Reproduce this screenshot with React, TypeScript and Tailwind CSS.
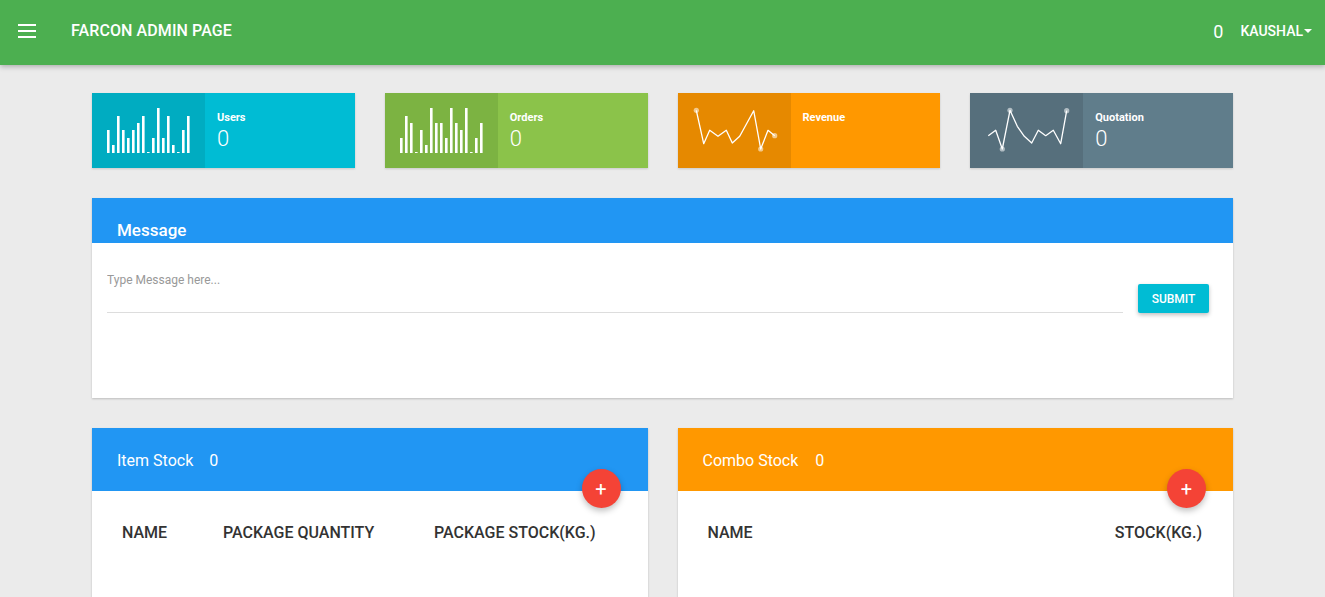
import React from 'react'

const USERS_BARS = [23, 8, 37, 23, 15, 23, 30, 37, 1, 15, 45, 15, 37, 8, 1, 23, 37]
const ORDERS_BARS = [15, 37, 30, 1, 23, 8, 45, 30, 30, 15, 45, 30, 23, 45, 1, 15, 30]

const REVENUE_PTS: [number, number][] = [
  [18.3, 17.3], [25.7, 50.7], [31.7, 37.3], [40, 43.3], [48.3, 37.3], [54.3, 50],
  [61.7, 43.3], [75.7, 17.7], [82.7, 56], [90, 37.3], [96.7, 42.7],
]
const QUOTE_PTS: [number, number][] = [
  [18.3, 42.7], [25.7, 37.3], [32.3, 56], [40, 17.3], [47.3, 33.3], [54.3, 43.3],
  [61.7, 50], [68.3, 37.3], [75.7, 42.7], [83.3, 37.3], [90.7, 50.7], [96.7, 17.7],
]

function Bars({ data }: { data: number[] }) {
  return (
    <svg width="113" height="75" viewBox="0 0 113 75">
      {data.map((h, i) => (
        <rect key={i} x={15 + i * 5} y={60 - h} width="2.6" height={h} fill="#fff" />
      ))}
    </svg>
  )
}

function Line({ pts, dots }: { pts: [number, number][]; dots: number[] }) {
  return (
    <svg width="113" height="75" viewBox="0 0 113 75">
      <polyline
        points={pts.map((p) => p.join(',')).join(' ')}
        fill="none"
        stroke="#fff"
        strokeWidth="1.3"
        strokeLinejoin="round"
      />
      {dots.map((d) => (
        <circle key={d} cx={pts[d][0]} cy={pts[d][1]} r="2.6" fill="rgba(255,255,255,0.55)" />
      ))}
    </svg>
  )
}

type Stat = { label: string; value?: string; bg: string; dark: string; chart: React.ReactNode }

function StatCard({ s }: { s: Stat }) {
  return (
    <div className={`flex h-[75px] shadow-[0_1px_2px_rgba(0,0,0,0.15)] ${s.bg}`}>
      <div className={`w-[113px] shrink-0 ${s.dark}`}>{s.chart}</div>
      <div className="pl-3 pt-[18px] text-white">
        <div className="text-[11px] font-bold leading-[14px]">{s.label}</div>
        {s.value !== undefined && (
          <div className="text-[22px] font-light leading-[26px] mt-[1px]">{s.value}</div>
        )}
      </div>
    </div>
  )
}

function Fab() {
  return (
    <button
      type="button"
      className="absolute right-[27px] top-[41px] w-[39px] h-[39px] rounded-full bg-[#F44336] text-white text-[20px] leading-none flex items-center justify-center shadow-[0_3px_6px_rgba(0,0,0,0.25)]"
    >
      +
    </button>
  )
}

export default function App() {
  const stats: Stat[] = [
    { label: 'Users', value: '0', bg: 'bg-[#00BCD4]', dark: 'bg-[#00ACC1]', chart: <Bars data={USERS_BARS} /> },
    { label: 'Orders', value: '0', bg: 'bg-[#8BC34A]', dark: 'bg-[#7CB342]', chart: <Bars data={ORDERS_BARS} /> },
    { label: 'Revenue', bg: 'bg-[#FF9800]', dark: 'bg-[#E68900]', chart: <Line pts={REVENUE_PTS} dots={[0, 8, 10]} /> },
    { label: 'Quotation', value: '0', bg: 'bg-[#607D8B]', dark: 'bg-[#566F7C]', chart: <Line pts={QUOTE_PTS} dots={[2, 3, 11]} /> },
  ]

  return (
    <div className="min-h-screen bg-[#EBEBEB] font-['Roboto',sans-serif]">
      <header className="h-[65px] bg-[#4CAF50] flex items-center pb-[3px] text-white shadow-[0_2px_5px_rgba(0,0,0,0.25)] relative z-10">
        <div className="ml-[18px] w-[18px] flex flex-col gap-[4px]">
          <span className="block h-[2px] bg-white" />
          <span className="block h-[2px] bg-white" />
          <span className="block h-[2px] bg-white" />
        </div>
        <div className="ml-[35px] text-[16px] font-medium tracking-[0.1px]">FARCON ADMIN PAGE</div>
        <div className="ml-auto flex items-center mr-[13px]">
          <span className="text-[18px] mr-[17px]">0</span>
          <span className="text-[14px] font-medium">KAUSHAL</span>
          <span className="ml-[1px] w-0 h-0 border-l-[4px] border-r-[4px] border-t-[4px] border-l-transparent border-r-transparent border-t-white" />
        </div>
      </header>

      <main className="px-[92px] pt-[28px]">
        <div className="grid grid-cols-4 gap-[30px]">
          {stats.map((s) => (
            <StatCard key={s.label} s={s} />
          ))}
        </div>

        <section className="mt-[30px] bg-white h-[200px] shadow-[0_1px_2px_rgba(0,0,0,0.2)]">
          <div className="h-[45px] bg-[#2196F3] flex items-end pl-[25px] pb-[1px]">
            <h2 className="text-white text-[17px] font-medium leading-[24px]">Message</h2>
          </div>
          <div className="flex items-start px-[15px] pt-[24px]">
            <div className="flex-1 border-b border-[#DDDDDD] h-[46px]">
              <input
                className="w-full text-[12px] text-[#333] placeholder:text-[#999] outline-none bg-transparent"
                placeholder="Type Message here..."
              />
            </div>
            <button
              type="button"
              className="ml-[15px] mr-[9px] mt-[17px] w-[71px] h-[29px] bg-[#00BCD4] text-white text-[12px] font-medium rounded-[2px] shadow-[0_2px_4px_rgba(0,0,0,0.25)]"
            >
              SUBMIT
            </button>
          </div>
        </section>

        <div className="mt-[30px] grid grid-cols-2 gap-[30px]">
          <section className="bg-white h-[200px] shadow-[0_1px_2px_rgba(0,0,0,0.2)]">
            <div className="relative h-[63px] bg-[#2196F3] flex items-center pl-[25px] pt-[2px] text-white text-[16px]">
              <span>Item Stock</span>
              <span className="ml-[16px]">0</span>
              <Fab />
            </div>
            <div className="flex pl-[30px] pt-[30px] text-[16px] font-medium text-[#333]">
              <div className="w-[101px]">NAME</div>
              <div className="w-[211px]">PACKAGE QUANTITY</div>
              <div>PACKAGE STOCK(KG.)</div>
            </div>
          </section>
          <section className="bg-white h-[200px] shadow-[0_1px_2px_rgba(0,0,0,0.2)]">
            <div className="relative h-[63px] bg-[#FF9800] flex items-center pl-[25px] pt-[2px] text-white text-[16px]">
              <span>Combo Stock</span>
              <span className="ml-[17px]">0</span>
              <Fab />
            </div>
            <div className="flex justify-between pl-[30px] pr-[31px] pt-[30px] text-[16px] font-medium text-[#333]">
              <div>NAME</div>
              <div>STOCK(KG.)</div>
            </div>
          </section>
        </div>
      </main>
    </div>
  )
}
